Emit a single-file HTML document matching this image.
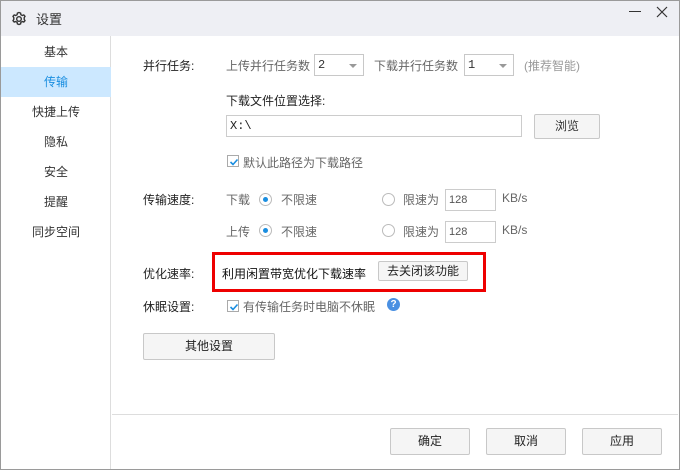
<!DOCTYPE html><html><head><meta charset="utf-8"><style>
*{margin:0;padding:0;box-sizing:border-box}
body{width:680px;height:470px;overflow:hidden;background:#fff;font-family:"Liberation Sans","Noto Sans CJK SC",sans-serif;font-size:12px;color:#333;position:relative}
.a{position:absolute}
.win{left:0;top:0;width:680px;height:470px;border:1px solid #9a9a9a}
.title{left:1px;top:1px;width:678px;height:35px;background:#eeeff4}
.side{left:1px;top:36px;width:110px;height:433px;border-right:1px solid #ddd}
.item{position:absolute;left:0;width:110px;height:30px;line-height:30px;text-align:center;font-size:12px;color:#333}
.sel{background:#cce8ff;color:#1a8ee0}
.lbl{color:#222}
.g{color:#666}
.sel2{border:1px solid #c8c8c8;height:22px;background:#fff;font-family:"Liberation Mono",monospace;font-size:12px;padding-left:3px;line-height:20px}
.arr{position:absolute;right:6px;top:9px;width:0;height:0;border-left:4px solid transparent;border-right:4px solid transparent;border-top:4px solid #999}
.btn{border:1px solid #c8c8c8;background:#f5f5f5;text-align:center;border-radius:2px}
.cb{width:12px;height:12px;border:1px solid #aaa;background:#fff}
.cb svg{position:absolute;left:1px;top:1px}
.rad{width:13px;height:13px;border:1px solid #bbb;border-radius:50%;background:#fff}
.rad.on::after{content:"";position:absolute;left:3px;top:3px;width:5px;height:5px;border-radius:50%;background:#1a8ee0}
.inp{border:1px solid #ccc;height:22px;font-size:11px;color:#555;padding-left:3px;line-height:20px;font-family:"Liberation Sans",sans-serif}
</style></head><body>
<div class="a win"></div>
<div class="a title"></div>
<svg class="a" style="left:11px;top:11px" width="16" height="16" viewBox="0 0 16 16"><path d="M8 1.5l1.6.6.3 1.6 1.4.8 1.5-.6 1.2 1.4-.8 1.4v1.6l.8 1.4-1.2 1.4-1.5-.6-1.4.8-.3 1.6-1.6.6-1.6-.6-.3-1.6-1.4-.8-1.5.6-1.2-1.4.8-1.4V6.7l-.8-1.4 1.2-1.4 1.5.6 1.4-.8.3-1.6z" fill="none" stroke="#333" stroke-width="1.4"/><circle cx="8" cy="8" r="2.3" fill="none" stroke="#333" stroke-width="1.4"/></svg>
<div class="a" style="left:36px;top:9px;font-size:13px;color:#333">设置</div>
<div class="a" style="left:629px;top:11px;width:12px;height:1px;background:#333"></div>
<svg class="a" style="left:656px;top:6px" width="12" height="12"><path d="M1 1L11 11M11 1L1 11" stroke="#333" stroke-width="1.2"/></svg>
<div class="a side">
<div class="item" style="top:1px">基本</div>
<div class="item sel" style="top:31px">传输</div>
<div class="item" style="top:61px">快捷上传</div>
<div class="item" style="top:91px">隐私</div>
<div class="item" style="top:121px">安全</div>
<div class="item" style="top:151px">提醒</div>
<div class="item" style="top:181px">同步空间</div>
</div>
<div class="a lbl" style="left:143px;top:57px">并行任务:</div>
<div class="a g" style="left:226px;top:57px">上传并行任务数</div>
<div class="a sel2" style="left:314px;top:54px;width:50px">2<span class="arr"></span></div>
<div class="a g" style="left:374px;top:57px">下载并行任务数</div>
<div class="a sel2" style="left:464px;top:54px;width:50px">1<span class="arr"></span></div>
<div class="a" style="left:524px;top:57px;color:#999">(推荐智能)</div>
<div class="a lbl" style="left:226px;top:92px">下载文件位置选择:</div>
<div class="a inp" style="left:226px;top:115px;width:296px;font-family:'Liberation Mono',monospace;color:#222;font-size:12px">X:\</div>
<div class="a btn" style="left:534px;top:114px;width:66px;height:25px;line-height:23px">浏览</div>
<div class="a cb" style="left:227px;top:155px"><svg width="10" height="10"><path d="M1.5 5l2.5 2.5 4.5-5" fill="none" stroke="#1a8ee0" stroke-width="1.6"/></svg></div>
<div class="a g" style="left:243px;top:154px">默认此路径为下载路径</div>
<div class="a lbl" style="left:143px;top:191px">传输速度:</div>
<div class="a g" style="left:226px;top:191px">下载</div>
<div class="a rad on" style="left:259px;top:193px"></div>
<div class="a g" style="left:281px;top:191px">不限速</div>
<div class="a rad" style="left:382px;top:193px"></div>
<div class="a g" style="left:403px;top:191px">限速为</div>
<div class="a inp" style="left:445px;top:189px;width:51px">128</div>
<div class="a g" style="left:502px;top:191px">KB/s</div>
<div class="a g" style="left:226px;top:223px">上传</div>
<div class="a rad on" style="left:259px;top:224px"></div>
<div class="a g" style="left:281px;top:223px">不限速</div>
<div class="a rad" style="left:382px;top:224px"></div>
<div class="a g" style="left:403px;top:223px">限速为</div>
<div class="a inp" style="left:445px;top:221px;width:51px">128</div>
<div class="a g" style="left:502px;top:223px">KB/s</div>
<div class="a lbl" style="left:143px;top:265px">优化速率:</div>
<div class="a" style="left:212px;top:252px;width:274px;height:40px;border:3px solid #e00"></div>
<div class="a" style="left:222px;top:265px;color:#111">利用闲置带宽优化下载速率</div>
<div class="a btn" style="left:378px;top:261px;width:90px;height:20px;line-height:18px;color:#222">去关闭该功能</div>
<div class="a lbl" style="left:143px;top:298px">休眠设置:</div>
<div class="a cb" style="left:227px;top:300px"><svg width="10" height="10"><path d="M1.5 5l2.5 2.5 4.5-5" fill="none" stroke="#1a8ee0" stroke-width="1.6"/></svg></div>
<div class="a g" style="left:243px;top:298px">有传输任务时电脑不休眠</div>
<div class="a" style="left:387px;top:298px;width:13px;height:13px;border-radius:50%;background:#4a90e2;color:#fff;font-size:10px;font-weight:bold;text-align:center;line-height:13px">?</div>
<div class="a btn" style="left:143px;top:333px;width:132px;height:27px;line-height:25px;color:#222">其他设置</div>
<div class="a" style="left:112px;top:414px;width:566px;height:1px;background:#ddd"></div>
<div class="a btn" style="left:390px;top:428px;width:80px;height:27px;line-height:25px;color:#222">确定</div>
<div class="a btn" style="left:486px;top:428px;width:80px;height:27px;line-height:25px;color:#222">取消</div>
<div class="a btn" style="left:582px;top:428px;width:80px;height:27px;line-height:25px;color:#222">应用</div>
</body></html>
